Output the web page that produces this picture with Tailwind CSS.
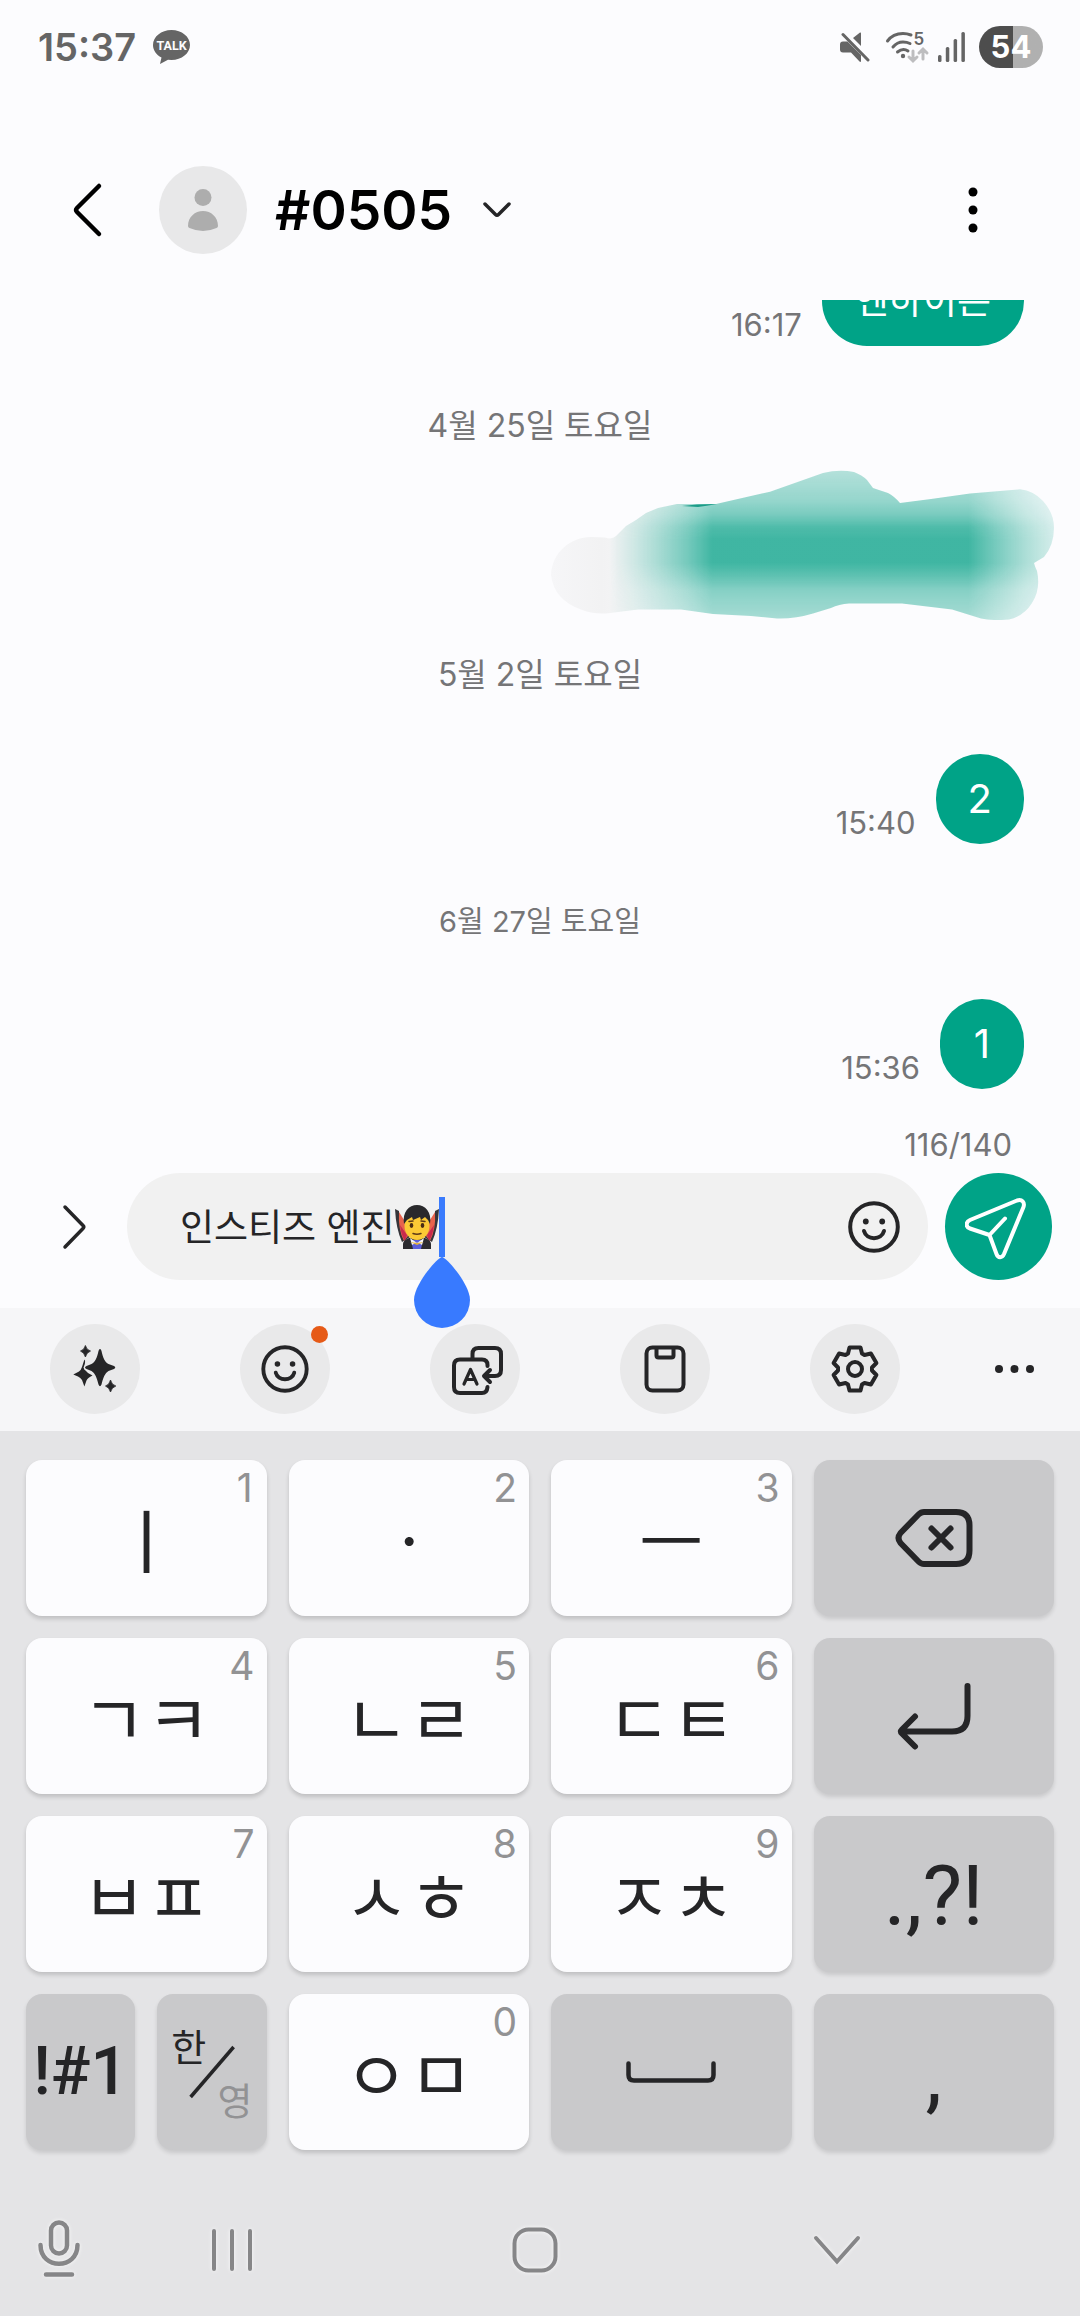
<!DOCTYPE html>
<html lang="ko">
<head>
<meta charset="utf-8">
<meta name="viewport" content="width=device-width, initial-scale=1">
<title>#0505</title>
<script src="https://cdn.jsdelivr.net/npm/@tailwindcss/browser@4"></script>
</head>
<body class="flex h-screen flex-col overflow-hidden bg-[#fcfcfe] font-['Inter','Noto_Sans_CJK_KR',sans-serif] text-[#252527]">

<!-- Status bar -->
<div class="flex h-[94px] shrink-0 items-center justify-between pr-[37px] pl-[38px] text-[#656565]">
  <div class="flex items-center gap-[17px]">
    <span class="text-[38px] leading-[48px] font-semibold">15:37</span>
    <svg class="h-[34px] w-[37px]" viewBox="0 0 37 34" aria-label="KakaoTalk">
      <path fill="#656565" d="M18.500 0C28.700 0 37 6.700 37 15S28.700 30 18.500 30L15 29.700L7 34L8.500 27.500C3.300 24.800 0 20.300 0 15C0 6.700 8.300 0 18.500 0Z"/>
      <text x="18.500" y="19.500" text-anchor="middle" font-family="Roboto" font-weight="700" font-size="12.500" fill="#fcfcfe">TALK</text>
    </svg>
  </div>
  <div class="flex items-center">
    <svg class="mr-[16px] h-[30px] w-[30px]" viewBox="0 0 30 30" fill="#656565" aria-label="음소거">
      <path d="M13 6L20 0.500Q21 0 21 1.500V14ZM7.500 9.500L21 23V29Q21 30.500 19.500 29.500L11 20.500H3Q0 20.500 0 17.500V12.500Q0 9.500 3 9.500Z"/>
      <path d="M3 2.500L28 28" stroke="#656565" stroke-width="3" stroke-linecap="round"/>
    </svg>
    <svg class="mr-[10px] h-[32px] w-[42px] overflow-visible" viewBox="0 0 42 32" fill="none" stroke="#656565" stroke-width="3" stroke-linecap="round" aria-label="Wi-Fi">
      <path d="M1.500 10Q7 2.500 17 2.500Q21 2.500 25 4M7 16Q11 11 17 11Q21 11 24 12.500M11.500 21Q17 16.500 22 20"/>
      <circle cx="17" cy="25" r="2.200" fill="#656565" stroke="none"/>
      <text x="27.500" y="14" font-family="Inter" font-weight="600" font-size="17" fill="#656565" stroke="none">5</text>
      <path stroke="#bdbdbf" d="M27 20V29M23 26L27 30L31 26M37 28V19M33 22L37 18L41 22"/>
    </svg>
    <svg class="mr-[14px] h-[30px] w-[27px]" viewBox="0 0 27 30" fill="#656565" aria-label="신호">
      <rect x="0" y="23" width="3.500" height="7" rx="1.500"/><rect x="7.800" y="15" width="3.500" height="15" rx="1.500"/><rect x="15.600" y="7" width="3.500" height="23" rx="1.500"/><rect x="23.400" y="0" width="3.500" height="30" rx="1.500"/>
    </svg>
    <span class="flex h-[42px] w-[64px] items-center justify-center rounded-full bg-linear-to-r from-[#4d4d4d] from-53% to-[#b0b0b0] to-53% text-[31px] leading-[42px] font-bold text-white">54</span>
  </div>
</div>

<!-- Conversation header -->
<header class="flex shrink-0 items-center pt-[72px] pr-[77px] pb-[46px] pl-[71px]">
  <button type="button" aria-label="뒤로" class="mr-[56px]">
    <svg class="h-[56px] w-[32px]" viewBox="0 0 32 56" fill="none" stroke="#000" stroke-width="4.500" stroke-linecap="round" stroke-linejoin="round"><path d="M28 4L6 26Q4 28 6 30L28 52"/></svg>
  </button>
  <svg class="mr-[28px] h-[88px] w-[88px]" viewBox="0 0 88 88" aria-label="프로필">
    <circle cx="44" cy="44" r="44" fill="#e8e8e9"/>
    <circle cx="44" cy="31.500" r="8.500" fill="#adadad"/>
    <path fill="#adadad" d="M29 60C29 51 36 45 44 45S59 51 59 60Q59 61.500 57.500 62Q44 68 30.500 62Q29 61.500 29 60Z"/>
  </svg>
  <h1 class="text-[55px] leading-[72px] font-semibold text-black">#0505</h1>
  <button type="button" aria-label="상세 정보" class="ml-[29px]">
    <svg class="h-[20px] w-[32px]" viewBox="0 0 32 20" fill="none" stroke="#252527" stroke-width="3.500" stroke-linecap="round" stroke-linejoin="round"><path d="M4 4L14.500 14.500Q16 16 17.500 14.500L28 4"/></svg>
  </button>
  <button type="button" aria-label="옵션 더보기" class="ml-auto">
    <svg class="h-[60px] w-[60px]" viewBox="0 0 60 60"><circle cx="30" cy="12" r="4.500"/><circle cx="30" cy="30" r="4.500"/><circle cx="30" cy="48" r="4.500"/></svg>
  </button>
</header>

<!-- Messages -->
<main class="flex min-h-0 flex-1 flex-col justify-end overflow-hidden pr-[56px] pb-[36px]">
  <div class="flex shrink-0 items-end justify-end gap-[20px]">
    <time class="text-[31px] leading-[42px] text-[#757577]">16:17</time>
    <p class="flex h-[90px] items-center rounded-[45px] bg-[#00a387] px-[33px] text-[37px] leading-[50px] text-white">엔하이픈</p>
  </div>
  <p class="mt-[58px] -mr-[56px] mb-[57px] shrink-0 text-center text-[32px] leading-[44px] text-[#757577]">4월 25일 토요일</p>
  <div class="relative h-[90px] shrink-0">
    <svg class="absolute -top-[35px] -right-[30px] h-[150px] w-[503px]" viewBox="0 0 503 150" aria-label="가려진 메시지">
      <defs>
        <linearGradient id="across" x1="0" x2="503" y1="0" y2="0" gradientUnits="userSpaceOnUse">
          <stop offset=".115" stop-color="#38b39f" stop-opacity="0"/><stop offset=".16" stop-color="#38b39f" stop-opacity=".18"/><stop offset=".21" stop-color="#38b39f" stop-opacity=".4"/><stop offset=".27" stop-color="#38b39f" stop-opacity=".68"/><stop offset=".32" stop-color="#38b39f" stop-opacity=".96"/><stop offset=".83" stop-color="#38b39f" stop-opacity=".96"/><stop offset=".88" stop-color="#38b39f" stop-opacity=".7"/><stop offset=".94" stop-color="#38b39f" stop-opacity=".42"/><stop offset="1" stop-color="#38b39f" stop-opacity=".2"/>
        </linearGradient>
        <linearGradient id="down" x1="0" x2="0" y1="0" y2="150" gradientUnits="userSpaceOnUse">
          <stop offset="0" stop-color="#fff" stop-opacity=".38"/><stop offset=".2" stop-color="#fff" stop-opacity=".54"/><stop offset=".3" stop-color="#fff" stop-opacity=".7"/><stop offset=".38" stop-color="#fff" stop-opacity=".92"/><stop offset=".46" stop-color="#fff"/><stop offset=".62" stop-color="#fff"/><stop offset=".7" stop-color="#fff" stop-opacity=".85"/><stop offset=".8" stop-color="#fff" stop-opacity=".63"/><stop offset="1" stop-color="#fff" stop-opacity=".44"/>
        </linearGradient>
        <linearGradient id="base" x1="0" x2="503" y1="0" y2="0" gradientUnits="userSpaceOnUse">
          <stop offset="0" stop-color="#f6f6f8"/><stop offset=".1" stop-color="#f2f2f3"/><stop offset=".3" stop-color="#fcfcfe"/>
        </linearGradient>
        <mask id="fade"><rect width="503" height="150" fill="url(#down)"/></mask>
        <path id="stroke" d="M0 105C1 82 20 67 40 67L54 67.500Q61 70 65 66L75 56L85 50L95 43L107 38L126 34L165 34L219 21.700L272 3Q288 -1 303 2Q311 5 316 10L322 18L337 23Q343 26 349 33L380 29L419 23.500L469 19.300Q483 21 492 31Q503 43 503 58Q503 75 493 87L483 93Q484 97 486 101Q490 119 481 133Q473 146 458 149.500Q442 151 430 148.500L401 139.500L351 133.500H298Q288 134 280 138L262 143.500Q244 149 226 148.500L200 146L162 144L130 139.500H87L55 143.500Q40 144 30 139.500Q3 130 0 105Z"/>
      </defs>
      <use href="#stroke" fill="url(#base)"/>
      <g mask="url(#fade)"><use href="#stroke" fill="url(#across)"/></g>
      <path fill="#1b9c88" d="M131 36L146 34.500L166 34Q155 36 147 37Z"/>
    </svg>
  </div>
  <p class="mt-[58px] -mr-[56px] mb-[57px] shrink-0 text-center text-[32px] leading-[44px] text-[#757577]">5월 2일 토요일</p>
  <div class="flex shrink-0 items-end justify-end gap-[20px]">
    <time class="text-[31px] leading-[42px] text-[#757577]">15:40</time>
    <p class="flex h-[90px] min-w-[84px] items-center justify-center rounded-[45px] bg-[#00a387] px-[32px] text-[40px] leading-[50px] text-white">2</p>
  </div>
  <p class="mt-[58px] -mr-[56px] mb-[57px] shrink-0 text-center text-[29px] leading-[40px] text-[#757577]">6월 27일 토요일</p>
  <div class="flex shrink-0 items-end justify-end gap-[20px]">
    <time class="text-[31px] leading-[42px] text-[#757577]">15:36</time>
    <p class="flex h-[90px] min-w-[84px] items-center justify-center rounded-[45px] bg-[#00a387] px-[32px] text-[40px] leading-[50px] text-white">1</p>
  </div>
</main>

<!-- Composer -->
<form class="shrink-0 pr-[28px] pb-[28px] pl-[58px]">
  <p class="mb-[8px] pr-[40px] text-right text-[31px] leading-[40px] text-[#757577]">116/140</p>
  <div class="flex items-center">
    <button type="button" aria-label="첨부 열기" class="mr-[37px]">
      <svg class="h-[48px] w-[32px]" viewBox="0 0 32 48" fill="none" stroke="#252527" stroke-width="3.500" stroke-linecap="round" stroke-linejoin="round"><path d="M7 4L25 22.500Q26.500 24 25 25.500L7 44"/></svg>
    </button>
    <div class="flex h-[107px] flex-1 items-center rounded-full bg-[#f1f1f1] pr-[28px] pl-[53px]">
      <input type="text" aria-label="메시지" value="인스티즈 엔진" class="w-[215px] bg-transparent pt-[2px] text-[37px] leading-[50px] text-[#252527] outline-none">
      <svg class="h-[46px] w-[44px]" viewBox="0 0 44 46" aria-label="뱀파이어">
        <path fill="#36353a" d="M0 5L4 7V15L9 24L15 33L7 38Q1 25 0 5ZM44 5L40 7V15L35 24L29 33L37 38Q43 25 44 5Z"/>
        <path fill="#e8634d" d="M4 8L9 16L13 32L9 37Q3 26 4 8ZM40 8L35 16L31 32L35 37Q41 26 40 8Z"/>
        <path fill="#c92b4d" d="M5 21L12 31L10 37Q6 31 5 21ZM39 21L32 31L34 37Q38 31 39 21Z"/>
        <path fill="#2b2b30" d="M8 45V40Q8 36 14 34H30Q36 36 36 40V45Z"/>
        <path fill="#5b5fd8" d="M16 36H28L26 45H18Z"/>
        <path fill="#f4f4f4" d="M15 34L22 39L29 34L27 41L22 38L17 41Z"/>
        <path fill="#e2b13c" d="M15 38L22 39L29 38L22 41Z"/>
        <ellipse cx="22" cy="22" rx="12.500" ry="14" fill="#fbc935"/>
        <path fill="#29292c" d="M9 20C7 8 14 1 22 1S37 8 35 20L33 16L30 13L26 16L25 13L18 16L17 13L12 16Z"/>
        <ellipse cx="16.500" cy="21.500" rx="1.800" ry="2.400" fill="#4a2d14"/><ellipse cx="27.500" cy="21.500" rx="1.800" ry="2.400" fill="#4a2d14"/>
        <path d="M14 17.500L18 17M26 17L30 17.500M18 29.500Q22 31 26 29.500" stroke="#5d3a17" stroke-width="1.500" fill="none" stroke-linecap="round"/>
      </svg>
      <span class="relative h-[60px] w-[6px] bg-[#3a7bfd]">
        <svg class="absolute top-[60px] -left-[25px] z-10 h-[71px] w-[56px]" viewBox="0 0 56 71"><path fill="#387aff" d="M28 0C32 0 56 27 56 43A28 28 0 0 1 0 43C0 27 24 0 28 0Z"/></svg>
      </span>
      <button type="button" aria-label="이모티콘" class="ml-auto">
        <svg class="h-[52px] w-[52px]" viewBox="0 0 52 52" fill="none" stroke="#252527" stroke-width="4" stroke-linecap="round"><circle cx="26" cy="26" r="23.800"/><path d="M16 30C18.500 39.500 33.500 39.500 36 30"/><circle cx="17.800" cy="20.500" r="2.900" fill="#252527" stroke="none"/><circle cx="34.200" cy="20.500" r="2.900" fill="#252527" stroke="none"/></svg>
      </button>
    </div>
    <button type="submit" aria-label="보내기" class="ml-[17px] flex h-[107px] w-[107px] items-center justify-center rounded-full bg-[#00a387]">
      <svg class="h-[68px] w-[68px]" viewBox="0 0 68 68" fill="none" stroke="#fff" stroke-width="4" stroke-linecap="round" stroke-linejoin="round"><path d="M5 27L52 7.500C57 6 60 9 58.500 14L39 61C37 65.500 33 65 31.500 61L24.500 42L5 35.500C0.500 34 0.500 29 5 27ZM24.500 42L40 25.500"/></svg>
    </button>
  </div>
</form>

<!-- Keyboard toolbar -->
<div class="flex shrink-0 items-center bg-[#f6f6f8] pt-[16px] pr-[30px] pb-[17px] pl-[50px]">
  <div class="flex flex-1 justify-between">
    <button type="button" aria-label="AI 도우미" class="flex h-[90px] w-[90px] items-center justify-center rounded-full bg-[#e9e9ea]">
      <svg class="h-[48px] w-[48px]" viewBox="0 0 48 48" fill="#252527">
        <path d="M13.400 14.500Q14.500 15 14 18Q13 21 13 24L17 28L21.500 30.500Q16.500 33 15.500 35.500L13.400 41.500L11 35Q9.500 32.500 7 31.500L2.300 29.500L8 26.500Q10 25 11 22Z"/>
        <path stroke="#e9e9ea" stroke-width="3" paint-order="stroke" d="M29 4Q30 4 30.500 6C32 13 34 17.500 37.500 19L43 21Q45.500 22.500 43 24L37.500 26C34 28 32 33 30.500 39.500Q29 43 27.500 39.500C26 33 24 28 20.500 26L15.500 24Q12.500 22.500 15.500 21L20.500 19C24 17.500 26 13 27.500 6Q28 4 29 4Z"/>
        <path d="M14.400 .5Q15.500 5 19.500 6Q15.500 7.500 14.400 12Q13.300 7.500 9.500 6Q13.300 5 14.400 .5ZM39.500 35Q40.600 40 44.800 41Q40.600 42.500 39.500 47Q38.400 42.500 34.500 41Q38.400 40 39.500 35Z" stroke="#252527" stroke-width=".8" stroke-linejoin="round"/>
      </svg>
    </button>
    <button type="button" aria-label="이모지" class="relative flex h-[90px] w-[90px] items-center justify-center rounded-full bg-[#e9e9ea]">
      <svg class="h-[48px] w-[48px]" viewBox="0 0 52 52" fill="none" stroke="#252527" stroke-width="4.200" stroke-linecap="round"><circle cx="26" cy="26" r="23.500"/><path d="M16 30C18.500 39.500 33.500 39.500 36 30"/><circle cx="17.800" cy="20.500" r="3" fill="#252527" stroke="none"/><circle cx="34.200" cy="20.500" r="3" fill="#252527" stroke="none"/></svg>
      <span class="absolute top-[2px] right-[2px] h-[17px] w-[17px] rounded-full bg-[#e65a17]"></span>
    </button>
    <button type="button" aria-label="번역" class="flex h-[90px] w-[90px] items-center justify-center rounded-full bg-[#e9e9ea]">
      <svg class="mt-[4px] ml-[4px] h-[52px] w-[52px]" viewBox="0 0 52 52" fill="none" stroke="#252527" stroke-width="4" stroke-linecap="round" stroke-linejoin="round"><path d="M36.500 21V20Q36.500 14.500 31 14.500H9Q3 14.500 3 20.500V42Q3 48 9 48H31Q36 48 36.500 42"/><path d="M21.500 13V9Q21.500 3 27.500 3H44Q50 3 50 9V25Q50 31 44 31H34M39 25L33 31L39 37"/><path stroke-width="3.200" d="M13 39L19.500 24.500L26 39M15.500 34.500H23.500"/></svg>
    </button>
    <button type="button" aria-label="클립보드" class="flex h-[90px] w-[90px] items-center justify-center rounded-full bg-[#e9e9ea]">
      <svg class="h-[48px] w-[42px]" viewBox="0 0 42 48" fill="none" stroke="#252527" stroke-width="4"><rect x="2.500" y="2.500" width="37" height="43" rx="6"/><path stroke-linejoin="round" d="M12.500 3V10.500Q12.500 12.500 14.500 12.500H27.500Q29.500 12.500 29.500 10.500V3"/></svg>
    </button>
    <button type="button" aria-label="설정" class="flex h-[90px] w-[90px] items-center justify-center rounded-full bg-[#e9e9ea]">
      <svg class="h-[48px] w-[48px]" viewBox="-24 -24 48 48" fill="none" stroke="#252527" stroke-width="4" stroke-linejoin="round"><path d="M-5.500 -21.500H5.500L7 -15.500L9.500 -14L15.900 -15.500L21.400 -6L17 -1.500V1.500L21.400 6L15.900 15.500L9.500 14L7 15.500L5.500 21.500H-5.500L-7 15.500L-9.500 14L-15.900 15.500L-21.400 6L-17 1.500V-1.500L-21.400 -6L-15.900 -15.500L-9.500 -14L-7 -15.500Z"/><circle r="7"/></svg>
    </button>
  </div>
  <button type="button" aria-label="더보기" class="ml-[80px]">
    <svg class="h-[40px] w-[70px]" viewBox="0 0 70 40" fill="#252527"><circle cx="19" cy="20" r="4"/><circle cx="34.500" cy="20" r="4"/><circle cx="50" cy="20" r="4"/></svg>
  </button>
</div>

<!-- Keyboard -->
<div class="shrink-0 bg-[#e4e4e6]">
  <div class="grid grid-cols-4 gap-[22px] px-[26px] pt-[29px] font-['Noto_Sans_CJK_KR',sans-serif] text-[70px] leading-[100px] font-normal">
    <button type="button" class="relative flex h-[156px] items-center justify-center rounded-[16px] bg-[#fcfcfe] shadow-[0_3px_4px_rgba(0,0,0,0.16)]">ㅣ<span class="absolute top-[4px] right-[14px] font-['Inter'] text-[39px] leading-[48px] text-[#929294]">1</span></button>
    <button type="button" class="relative flex h-[156px] items-center justify-center rounded-[16px] bg-[#fcfcfe] shadow-[0_3px_4px_rgba(0,0,0,0.16)]">ㆍ<span class="absolute top-[4px] right-[12px] font-['Inter'] text-[39px] leading-[48px] text-[#929294]">2</span></button>
    <button type="button" class="relative flex h-[156px] items-center justify-center rounded-[16px] bg-[#fcfcfe] shadow-[0_3px_4px_rgba(0,0,0,0.16)]">ㅡ<span class="absolute top-[4px] right-[12px] font-['Inter'] text-[39px] leading-[48px] text-[#929294]">3</span></button>
    <button type="button" aria-label="지우기" class="flex h-[156px] items-center justify-center rounded-[16px] bg-[#c9c9cb] shadow-[0_3px_4px_rgba(0,0,0,0.12)]">
      <svg class="h-[60px] w-[78px]" viewBox="0 0 78 60" fill="none" stroke="#252527" stroke-width="6" stroke-linecap="round" stroke-linejoin="round"><path d="M29 4H61Q74.500 4 74.500 17.500V42.500Q74.500 56 61 56H29Q26 56 23.500 53.500L5.500 35Q1.500 30 5.500 25L23.500 6.500Q26 4 29 4Z"/><path d="M36.500 20.500L55.500 39.500M55.500 20.500L36.500 39.500"/></svg>
    </button>

    <button type="button" class="relative flex h-[156px] items-center justify-center rounded-[16px] bg-[#fcfcfe] shadow-[0_3px_4px_rgba(0,0,0,0.16)]">ㄱㅋ<span class="absolute top-[4px] right-[12px] font-['Inter'] text-[39px] leading-[48px] text-[#929294]">4</span></button>
    <button type="button" class="relative flex h-[156px] items-center justify-center rounded-[16px] bg-[#fcfcfe] shadow-[0_3px_4px_rgba(0,0,0,0.16)]">ㄴㄹ<span class="absolute top-[4px] right-[12px] font-['Inter'] text-[39px] leading-[48px] text-[#929294]">5</span></button>
    <button type="button" class="relative flex h-[156px] items-center justify-center rounded-[16px] bg-[#fcfcfe] shadow-[0_3px_4px_rgba(0,0,0,0.16)]">ㄷㅌ<span class="absolute top-[4px] right-[12px] font-['Inter'] text-[39px] leading-[48px] text-[#929294]">6</span></button>
    <button type="button" aria-label="엔터" class="flex h-[156px] items-center justify-center rounded-[16px] bg-[#c9c9cb] shadow-[0_3px_4px_rgba(0,0,0,0.12)]">
      <svg class="h-[68px] w-[74px]" viewBox="0 0 74 68" fill="none" stroke="#252527" stroke-width="6" stroke-linecap="round" stroke-linejoin="round"><path d="M70.500 4V34Q70.500 49.500 55 49.500H4M18 34.500L5 47.500Q3 49.500 5 51.500L18 64.500"/></svg>
    </button>

    <button type="button" class="relative flex h-[156px] items-center justify-center rounded-[16px] bg-[#fcfcfe] shadow-[0_3px_4px_rgba(0,0,0,0.16)]">ㅂㅍ<span class="absolute top-[4px] right-[12px] font-['Inter'] text-[39px] leading-[48px] text-[#929294]">7</span></button>
    <button type="button" class="relative flex h-[156px] items-center justify-center rounded-[16px] bg-[#fcfcfe] shadow-[0_3px_4px_rgba(0,0,0,0.16)]">ㅅㅎ<span class="absolute top-[4px] right-[12px] font-['Inter'] text-[39px] leading-[48px] text-[#929294]">8</span></button>
    <button type="button" class="relative flex h-[156px] items-center justify-center rounded-[16px] bg-[#fcfcfe] shadow-[0_3px_4px_rgba(0,0,0,0.16)]">ㅈㅊ<span class="absolute top-[4px] right-[12px] font-['Inter'] text-[39px] leading-[48px] text-[#929294]">9</span></button>
    <button type="button" class="flex h-[156px] items-center justify-center rounded-[16px] bg-[#c9c9cb] pt-[6px] font-['Roboto'] text-[84px] shadow-[0_3px_4px_rgba(0,0,0,0.12)]">.,?!</button>

    <div class="grid grid-cols-2 gap-[22px]">
      <button type="button" class="flex h-[156px] items-center justify-center rounded-[16px] bg-[#c9c9cb] font-['Roboto'] text-[66px] font-medium shadow-[0_3px_4px_rgba(0,0,0,0.12)]">!#1</button>
      <button type="button" class="flex h-[156px] flex-col justify-center rounded-[16px] bg-[#c9c9cb] px-[14px] text-[38px] leading-[54px] shadow-[0_3px_4px_rgba(0,0,0,0.12)]">
        <span class="self-start">한</span>
        <svg class="-my-[27px] h-[54px] w-full" viewBox="0 0 80 54" fill="none" stroke="#252527" stroke-width="3.500"><path d="M19 52L62 2"/></svg>
        <span class="self-end text-[#929294]">영</span>
      </button>
    </div>
    <button type="button" class="relative flex h-[156px] items-center justify-center rounded-[16px] bg-[#fcfcfe] shadow-[0_3px_4px_rgba(0,0,0,0.16)]">ㅇㅁ<span class="absolute top-[4px] right-[12px] font-['Inter'] text-[39px] leading-[48px] text-[#929294]">0</span></button>
    <button type="button" aria-label="스페이스" class="flex h-[156px] items-center justify-center rounded-[16px] bg-[#c9c9cb] shadow-[0_3px_4px_rgba(0,0,0,0.12)]">
      <svg class="h-[22px] w-[90px]" viewBox="0 0 90 22" fill="none" stroke="#252527" stroke-width="4.500" stroke-linecap="round"><path d="M2.500 2.500V14Q2.500 19.500 8 19.500H82Q87.500 19.500 87.500 14V2.500"/></svg>
    </button>
    <button type="button" class="flex h-[156px] items-center justify-center rounded-[16px] bg-[#c9c9cb] pt-[6px] font-['Roboto'] text-[84px] shadow-[0_3px_4px_rgba(0,0,0,0.12)]">,</button>
  </div>

  <!-- Navigation bar -->
  <nav class="flex pt-[70px] pr-[213px] pb-[36px] pl-[29px]">
    <button type="button" aria-label="음성 입력" class="mr-[113px]">
      <svg class="h-[60px] w-[60px] drop-shadow-[0_0_2px_rgba(255,255,255,0.8)]" viewBox="0 0 60 60" fill="none" stroke="#868688" stroke-width="4.500" stroke-linecap="round"><rect x="22" y="2.500" width="16" height="31" rx="8"/><path d="M11.500 25C11.500 50 48.500 50 48.500 25M17 54.500H43"/></svg>
    </button>
    <div class="flex flex-1 justify-between">
      <button type="button" aria-label="최근 앱"><svg class="h-[60px] w-[60px] drop-shadow-[0_0_2px_rgba(255,255,255,0.8)]" viewBox="0 0 60 60" fill="none" stroke="#868688" stroke-width="4" stroke-linecap="round"><path d="M12 11V49M30 11V49M48 11V49"/></svg></button>
      <button type="button" aria-label="홈"><svg class="h-[60px] w-[60px] drop-shadow-[0_0_2px_rgba(255,255,255,0.8)]" viewBox="0 0 60 60" fill="none" stroke="#868688" stroke-width="4"><rect x="9.500" y="9.500" width="41" height="41" rx="14"/></svg></button>
      <button type="button" aria-label="키보드 숨기기"><svg class="h-[60px] w-[60px] drop-shadow-[0_0_2px_rgba(255,255,255,0.8)]" viewBox="0 0 60 60" fill="none" stroke="#868688" stroke-width="4" stroke-linecap="round"><path d="M9 18L30 41.500L51 18"/></svg></button>
    </div>
  </nav>
</div>
</body>
</html>
